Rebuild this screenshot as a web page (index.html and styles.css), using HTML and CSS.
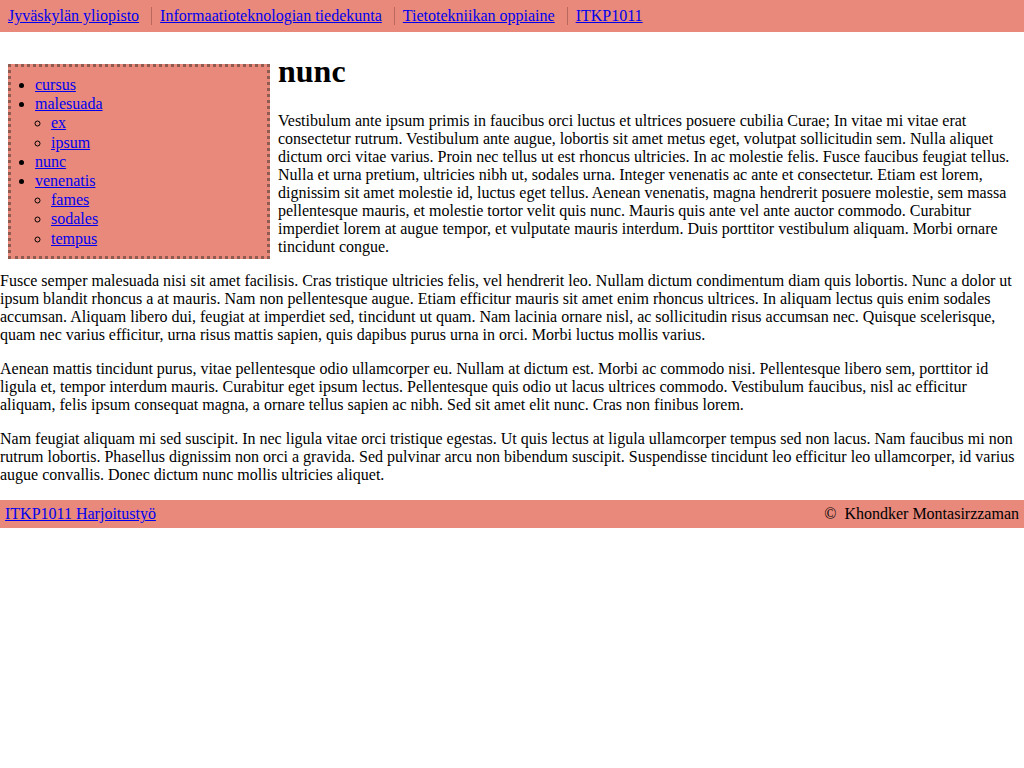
FILE: index.html
```html
<!DOCTYPE html>
<html lang="fi">
<head>
<meta charset="utf-8">
<title>nunc</title>
<link rel="stylesheet" href="styles.css">
</head>
<body>
<header class="topbar">
  <ul class="crumbs">
    <li><a href="#">Jyväskylän yliopisto</a></li>
    <li><a href="#">Informaatioteknologian tiedekunta</a></li>
    <li><a href="#">Tietotekniikan oppiaine</a></li>
    <li><a href="#">ITKP1011</a></li>
  </ul>
</header>
<main class="content">
  <nav class="sidenav">
    <ul class="menu">
      <li><a href="#">cursus</a></li>
      <li><a href="#">malesuada</a>
        <ul class="submenu">
          <li><a href="#">ex</a></li>
          <li><a href="#">ipsum</a></li>
        </ul>
      </li>
      <li><a href="#">nunc</a></li>
      <li><a href="#">venenatis</a>
        <ul class="submenu">
          <li><a href="#">fames</a></li>
          <li><a href="#">sodales</a></li>
          <li><a href="#">tempus</a></li>
        </ul>
      </li>
    </ul>
  </nav>
  <h1 class="title">nunc</h1>
  <p>Vestibulum ante ipsum primis in faucibus orci luctus et ultrices posuere cubilia Curae; In vitae mi vitae erat consectetur rutrum. Vestibulum ante augue, lobortis sit amet metus eget, volutpat sollicitudin sem. Nulla aliquet dictum orci vitae varius. Proin nec tellus ut est rhoncus ultricies. In ac molestie felis. Fusce faucibus feugiat tellus. Nulla et urna pretium, ultricies nibh ut, sodales urna. Integer venenatis ac ante et consectetur. Etiam est lorem, dignissim sit amet molestie id, luctus eget tellus. Aenean venenatis, magna hendrerit posuere molestie, sem massa pellentesque mauris, et molestie tortor velit quis nunc. Mauris quis ante vel ante auctor commodo. Curabitur imperdiet lorem at augue tempor, et vulputate mauris interdum. Duis porttitor vestibulum aliquam. Morbi ornare tincidunt congue.</p>
  <p>Fusce semper malesuada nisi sit amet facilisis. Cras tristique ultricies felis, vel hendrerit leo. Nullam dictum condimentum diam quis lobortis. Nunc a dolor ut ipsum blandit rhoncus a at mauris. Nam non pellentesque augue. Etiam efficitur mauris sit amet enim rhoncus ultrices. In aliquam lectus quis enim sodales accumsan. Aliquam libero dui, feugiat at imperdiet sed, tincidunt ut quam. Nam lacinia ornare nisl, ac sollicitudin risus accumsan nec. Quisque scelerisque, quam nec varius efficitur, urna risus mattis sapien, quis dapibus purus urna in orci. Morbi luctus mollis varius.</p>
  <p>Aenean mattis tincidunt purus, vitae pellentesque odio ullamcorper eu. Nullam at dictum est. Morbi ac commodo nisi. Pellentesque libero sem, porttitor id ligula et, tempor interdum mauris. Curabitur eget ipsum lectus. Pellentesque quis odio ut lacus ultrices commodo. Vestibulum faucibus, nisl ac efficitur aliquam, felis ipsum consequat magna, a ornare tellus sapien ac nibh. Sed sit amet elit nunc. Cras non finibus lorem.</p>
  <p>Nam feugiat aliquam mi sed suscipit. In nec ligula vitae orci tristique egestas. Ut quis lectus at ligula ullamcorper tempus sed non lacus. Nam faucibus mi non rutrum lobortis. Phasellus dignissim non orci a gravida. Sed pulvinar arcu non bibendum suscipit. Suspendisse tincidunt leo efficitur leo ullamcorper, id varius augue convallis. Donec dictum nunc mollis ultricies aliquet.</p>
</main>
<footer class="footer">
  <a href="#">ITKP1011 Harjoitustyö</a>
  <span class="author">©&nbsp; Khondker Montasirzzaman</span>
</footer>
</body>
</html>
```

FILE: styles.css
```css
html, body {
  margin: 0;
  padding: 0;
  background: #ffffff;
}
body {
  font-family: "Liberation Serif", "Times New Roman", serif;
  font-size: 16px;
  color: #000000;
}
a {
  color: #0000ee;
}
.topbar {
  background: #e8897c;
  height: 32px;
  box-sizing: border-box;
  padding: 7px 8px;
}
.crumbs {
  list-style: none;
  margin: 0;
  padding: 0;
  display: flex;
}
.crumbs li {
  margin-right: 12px;
}
.crumbs li + li {
  border-left: 1px solid #b8685c;
  padding-left: 8px;
}
.content {
  display: flow-root;
}
.sidenav {
  float: left;
  width: 256px;
  margin: 32px 8px 8px 8px;
  background: #e8897c;
  border: 3px dotted #8f5a50;
  padding: 8px 0;
  line-height: 1.2;
}
.menu {
  margin: 0;
  padding-left: 24px;
  list-style: disc;
}
.submenu {
  margin: 0;
  padding-left: 16px;
  list-style: circle;
}
.title {
  font-size: 32px;
  font-weight: bold;
  margin: 21.44px 0;
}
.content p {
  margin: 16px 0;
}
.footer {
  background: #e8897c;
  padding: 5px 5px;
  display: flex;
  justify-content: space-between;
}
```
